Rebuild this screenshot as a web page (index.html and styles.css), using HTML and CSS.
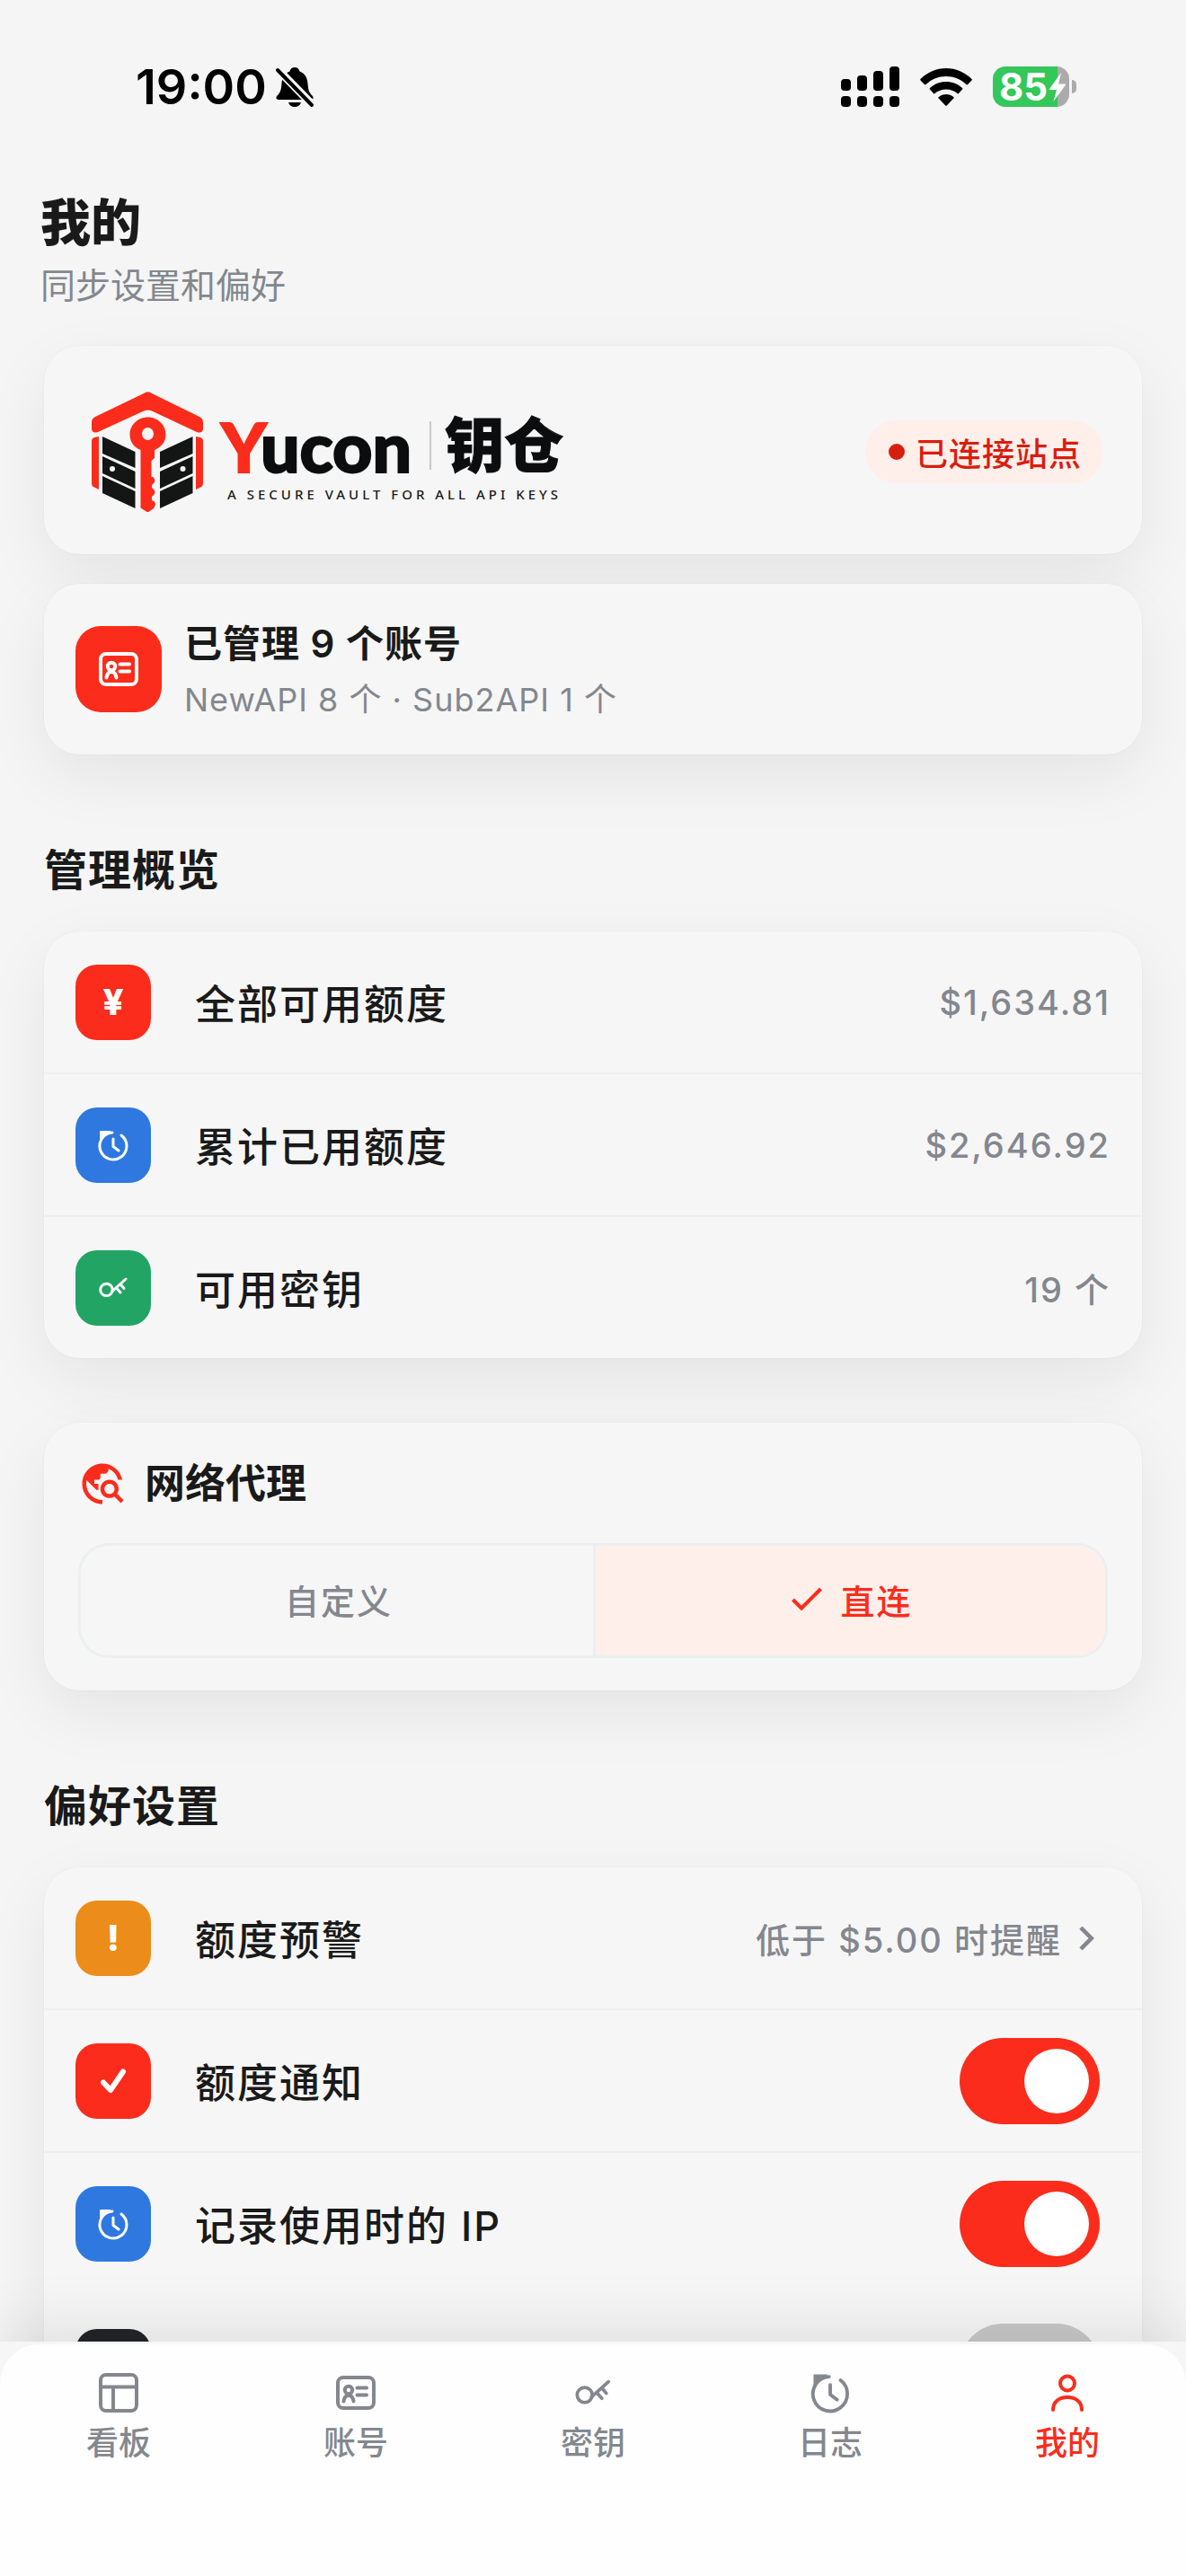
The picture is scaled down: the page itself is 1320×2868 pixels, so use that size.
FILE: index.html
```html
<!DOCTYPE html>
<html lang="zh-CN">
<head>
<meta charset="utf-8">
<meta name="viewport" content="width=device-width, initial-scale=1">
<title>我的 - Yucon 钥仓</title>
<link rel="stylesheet" href="styles.css">
</head>
<body>
<svg class="sprite" aria-hidden="true">
  <symbol id="i-card" viewBox="0 0 46 40">
    <rect x="3" y="3" width="40" height="34" rx="6"/>
    <circle cx="15" cy="17" r="4.2"/>
    <path d="M9.500 29.500c.6-4 2.600-6.500 5.500-6.500s4.900 2.500 5.500 6.500M24.500 14.500h10.500M24.500 22.500h10.500"/>
  </symbol>
  <symbol id="i-clock" viewBox="0 0 36 36">
    <path d="M27 7A15 15 0 1 1 17 4M18 11v8.500l6 4.500"/>
    <path d="M4 2.500H15L4 12z" fill="currentColor" stroke-width="1"/>
  </symbol>
  <symbol id="i-key" viewBox="0 0 34 26">
    <circle cx="9.500" cy="15" r="6.800"/>
    <path d="M15.500 17 31 3M20.500 13l4.500 5M25 8.800l4 4.700"/>
  </symbol>
  <symbol id="i-check" viewBox="0 0 28 28"><path d="M3 15.500 11 24 25 3.500"/></symbol>
</svg>
<div class="app">
  <div class="status">
    <div class="status-side">
      <time class="clock">19:00</time>
      <svg class="bell" viewBox="0 0 42 44">
        <path d="M21 0c3 0 5 2 5.500 4.500C33 7 35 12 35.500 18c.5 8 2 10.500 5 13.500 2 2 1 4.500-1.500 4.500H3c-2.500 0-3.500-2.500-1.500-4.500 3-3 4.500-5.500 5-13.500C7 12 9 7 15.500 4.500 16 2 18 0 21 0zM14 39h14c-1 3.500-3.500 5-7 5s-6-1.500-7-5z"/>
        <path class="bell-gap" d="M0 0 42 43"/>
        <path class="bell-slash" d="M2 3 40 42"/>
      </svg>
    </div>
    <div class="status-side status-right">
      <svg class="signal" viewBox="0 0 65 45">
        <rect y="14" width="11" height="13" rx="4"/><rect x="18" y="10" width="11" height="17" rx="4"/><rect x="36" y="5" width="11" height="22" rx="4"/><rect x="54" width="11" height="27" rx="4"/>
        <rect y="33" width="11" height="12" rx="4"/><rect x="18" y="33" width="11" height="12" rx="4"/><rect x="36" y="33" width="11" height="12" rx="4"/><rect x="54" y="33" width="11" height="12" rx="4"/>
      </svg>
      <svg class="wifi" viewBox="0 0 58 42">
        <path d="M29 0C40 0 50 4.500 57.500 12 58 12.500 58 13 57.500 13.500L53 18c-.5.500-1 .5-1.500 0C45 12 37.500 9 29 9S13 12 6.500 18c-.5.500-1 .5-1.500 0L.5 13.500C0 13 0 12.500.5 12 8 4.500 18 0 29 0z"/>
        <path d="M29 15c7 0 13 2.500 18 7 .6.500.6 1 0 1.500L43 28c-.5.500-1 .5-1.500 0C38 25 34 23.500 29 23.500S20 25 16.500 28c-.5.500-1 .5-1.500 0l-4-4.500c-.6-.5-.6-1 0-1.500 5-4.500 11-7 18-7z"/>
        <path d="M29 29c3.200 0 6 1.200 8.300 3 .6.500.6 1 0 1.600L30 41.300c-.7.700-1.300.7-2 0l-7.300-7.700c-.6-.6-.6-1.100 0-1.600C23 30.200 25.800 29 29 29z"/>
      </svg>
      <div class="battery-wrap">
        <div class="battery"><span>85</span><svg viewBox="0 0 20 32"><path d="M14 0 1 18c-.5.700-.2 1 .5 1H9L5.500 32 19 13.500c.5-.7.200-1-.5-1H11z"/></svg></div>
        <i class="battery-nub"></i>
      </div>
    </div>
  </div>

  <main class="screen">
    <header class="head">
      <h1>我的</h1>
      <p>同步设置和偏好</p>
    </header>

    <section class="card brand">
      <div class="logo">
        <svg class="logo-mark" viewBox="0 0 124 134">
          <path class="red" d="M58 2Q62.500-1.500 67 2L120 28Q124 30 124 34V42Q123 47 117 45L68 22Q62.500 19 57 22L7 45Q1 47 0 42V34Q0 30 4 28Z"/>
          <path class="red" d="M8 50v59l-6-3q-2-1-2-4V55q0-3 3-4zM116 50v59l6-3q2-1 2-4V55q0-3-3-4z"/>
          <path class="black" d="M12 50l36.500 17v18L12 69zM12 72l36.500 17v19L12 91zM12 94l36.500 17v19L12 113zM112.500 50 76 67v18l36.500-16zM112.500 72 76 89v19l36.500-17zM112.500 94 76 111v19l36.500-17z"/>
          <circle class="hole" cx="23" cy="86" r="3"/><circle class="hole" cx="101.500" cy="86" r="3"/>
          <path class="red" fill-rule="evenodd" d="M62.500 28.500c11 0 20 8.500 20 19.500 0 7-4 13-12.500 17v9l-3.500 3v18h2q2.500 3 1.500 6l-3 3v3l3 3q1 3-1 5l-2 2v4q4 1 4 5l-2 4-6.500 4.500-8-5V65c-8-3-12-10-12-17 0-11 9-19.500 20-19.500zm0 11.500a6.500 7 0 1 0 0 14 6.500 7 0 1 0 0-14z"/>
        </svg>
        <div class="logo-text">
          <div class="logo-name"><span class="logo-en"><b>Y</b>ucon</span><i></i><span class="logo-cn">钥仓</span></div>
          <div class="logo-tag">A SECURE VAULT FOR ALL API KEYS</div>
        </div>
      </div>
      <div class="badge"><i></i>已连接站点</div>
    </section>

    <section class="card account">
      <span class="tile tile-lg red-bg"><svg class="ico w46"><use href="#i-card"/></svg></span>
      <div class="account-text">
        <h2 class="account-title">已管理 9 个账号</h2>
        <p class="account-sub">NewAPI 8 个 · Sub2API 1 个</p>
      </div>
    </section>

    <h2 class="section-title">管理概览</h2>
    <ul class="card list">
      <li><span class="tile red-bg">¥</span><span class="label">全部可用额度</span><span class="value">$1,634.81</span></li>
      <li><span class="tile blue-bg"><svg class="ico w36"><use href="#i-clock"/></svg></span><span class="label">累计已用额度</span><span class="value">$2,646.92</span></li>
      <li><span class="tile green-bg"><svg class="ico w34"><use href="#i-key"/></svg></span><span class="label">可用密钥</span><span class="value">19 个</span></li>
    </ul>

    <section class="card proxy">
      <h2 class="proxy-title">
        <svg viewBox="0 0 24 24"><path d="M19.300 16.900c.4-.7.7-1.500.7-2.400 0-2.500-2-4.500-4.500-4.500S11 12 11 14.500s2 4.500 4.500 4.500c.9 0 1.700-.3 2.400-.7l3.200 3.200 1.400-1.400-3.200-3.200zm-3.800.1c-1.400 0-2.500-1.100-2.500-2.500s1.100-2.500 2.500-2.500 2.500 1.100 2.500 2.500-1.100 2.500-2.500 2.500zM12 20v2C6.480 22 2 17.520 2 12S6.480 2 12 2c4.840 0 8.870 3.440 9.800 8h-2.070c-.64-2.460-2.400-4.470-4.730-5.410V5c0 1.100-.9 2-2 2h-2v2c0 .55-.45 1-1 1H8v2h2v3H9l-4.790-4.790C4.080 10.790 4 11.380 4 12c0 4.410 3.590 8 8 8z"/></svg>
        网络代理
      </h2>
      <div class="segment">
        <label><input type="radio" name="proxy"><span>自定义</span></label>
        <label><input type="radio" name="proxy" checked><svg viewBox="0 0 34 26"><path d="M1.500 14 11 23.500 32.500 2"/></svg><span>直连</span></label>
      </div>
    </section>

    <h2 class="section-title">偏好设置</h2>
    <ul class="card list">
      <li><span class="tile orange-bg">!</span><span class="label">额度预警</span>
        <button class="value link" type="button">低于 $5.00 时提醒<svg viewBox="0 0 24 24"><path d="M10 6 8.590 7.410 13.170 12l-4.580 4.590L10 18l6-6z"/></svg></button></li>
      <li><span class="tile red-bg"><svg class="ico w28 thick"><use href="#i-check"/></svg></span><label class="label" for="s1">额度通知</label><input class="switch" id="s1" type="checkbox" checked></li>
      <li><span class="tile blue-bg"><svg class="ico w36"><use href="#i-clock"/></svg></span><label class="label" for="s2">记录使用时的 IP</label><input class="switch" id="s2" type="checkbox" checked></li>
      <li class="plain"><span class="tile dark-bg"></span><span class="label"></span><input class="switch" type="checkbox" aria-label="开关"></li>
    </ul>
  </main>

  <div class="dock">
    <nav class="tabs">
      <a href="#"><span><svg class="ico w46" viewBox="0 0 46 46"><rect x="3" y="3" width="40" height="40" rx="6"/><path d="M3 16.500h40M17 16.500V43"/></svg></span>看板</a>
      <a href="#"><span><svg class="ico w46"><use href="#i-card"/></svg></span>账号</a>
      <a href="#"><span><svg class="ico w42 fine"><use href="#i-key"/></svg></span>密钥</a>
      <a href="#"><span><svg class="ico w46 fine"><use href="#i-clock"/></svg></span>日志</a>
      <a href="#" class="active" aria-current="page"><span><svg class="ico w46" viewBox="0 0 46 46"><circle cx="23" cy="12.500" r="8"/><path d="M7 42c0-8.500 6.500-14 16-14s16 5.500 16 14"/></svg></span>我的</a>
    </nav>
  </div>
</div>
</body>
</html>
```

FILE: styles.css
```css
* { box-sizing: border-box; margin: 0; padding: 0; }

body {
  background: #f5f5f5;
  color: #1a1a1a;
  font-family: Inter, "Noto Sans CJK SC", sans-serif;
}

.sprite { position: absolute; width: 0; height: 0; }
.app { display: flex; flex-direction: column; height: 100vh; }

/* status bar */
.status {
  flex: none;
  display: flex;
  align-items: center;
  justify-content: space-between;
  height: 196px;
  padding: 0 122px 3px 151px;
  color: #000;
}
.status-side { display: flex; align-items: center; gap: 10px; }
.status-right { gap: 23px; }
.clock { font-size: 54px; font-weight: 600; }
.bell { width: 42px; height: 44px; }
.bell-gap { stroke: #f5f5f5; stroke-width: 9; }
.bell-slash { stroke: #000; stroke-width: 4; stroke-linecap: round; }
.signal { width: 65px; height: 45px; }
.wifi { width: 58px; height: 42px; }
.battery-wrap { display: flex; align-items: center; gap: 3px; }
.battery {
  display: flex;
  align-items: center;
  gap: 1px;
  width: 85px;
  height: 45px;
  padding-left: 7px;
  border-radius: 14px;
  background: linear-gradient(90deg, #34c759 72px, #ababab 72px);
  color: #fff;
  font-size: 42px;
  font-weight: 700;
}
.battery svg { width: 20px; height: 32px; fill: #fff; flex: none; }
.battery-nub { width: 5px; height: 15px; border-radius: 0 5px 5px 0; background: #ababab; }

/* page */
.screen {
  flex: 1;
  min-height: 0;
  overflow: hidden auto;
  scrollbar-width: none;
  padding: 16px 49px 64px;
}
.head { margin: 0 -4px 39px; }
.head h1 { font-size: 56px; line-height: 72px; font-weight: 800; }
.head p { margin-top: 6px; font-size: 39px; line-height: 56px; color: #84878e; }

.card {
  border-radius: 40px;
  background: #f6f6f6;
  box-shadow: 0 0 0 1px rgba(0, 0, 0, .015), 0 24px 72px rgba(0, 0, 0, .07);
}

.brand {
  display: flex;
  align-items: center;
  justify-content: space-between;
  height: 232px;
  padding: 4px 43px 0 53px;
}
.logo { display: flex; align-items: center; gap: 20px; }
.logo-mark { width: 124px; height: 134px; }
.red { fill: #fb2c1b; }
.black { fill: #141616; }
.hole { fill: #f6f6f6; }
.logo-text { display: flex; flex-direction: column; gap: 6px; padding-top: 12px; }
.logo-name { display: flex; align-items: center; line-height: 76px; color: #0c0d0e; }
.logo-en { font-family: Lato, sans-serif; font-size: 77px; font-weight: 900; -webkit-text-stroke: 2px currentColor; }
.logo-en b { color: #fb2c1b; }
.logo-name i { width: 2px; height: 54px; margin: 0 15px 0 20px; background: #c8c8c8; }
.logo-cn { font-size: 66px; font-weight: 900; -webkit-text-stroke: 1px currentColor; }
.logo-tag {
  padding-left: 7px;
  font-family: "Noto Sans", sans-serif;
  font-size: 15px;
  line-height: 20px;
  letter-spacing: 4px;
  font-weight: 500;
}
.badge {
  display: flex;
  align-items: center;
  gap: 12px;
  height: 70px;
  padding: 0 24px 0 26px;
  border-radius: 35px;
  background: #ffefeb;
  color: #d81e0e;
  font-size: 36px;
  font-weight: 500;
  letter-spacing: 1px;
}
.badge i { width: 18px; height: 18px; border-radius: 50%; background: #d81e0e; }

.account { display: flex; align-items: center; gap: 25px; height: 190px; margin-top: 33px; padding: 0 35px; }
.account-text { padding-top: 6px; line-height: 62px; }
.account-title { font-size: 42px; font-weight: 600; letter-spacing: 1px; }
.account-sub { font-size: 36px; letter-spacing: 1px; color: #84878e; }

.section-title { margin: 97px 0 36px; font-size: 48px; line-height: 64px; font-weight: 600; letter-spacing: 1px; }

.tile {
  flex: none;
  display: grid;
  place-items: center;
  width: 84px;
  height: 84px;
  border-radius: 24px;
  color: #fff;
  font-size: 40px;
  font-weight: 800;
}
.tile-lg { width: 96px; height: 96px; border-radius: 28px; }
.red-bg { background: #fb2c1b; }
.blue-bg { background: #2f78e0; }
.green-bg { background: #22a464; }
.orange-bg { background: #ec8c1a; }
.dark-bg { background: #222528; }

.ico {
  fill: none;
  stroke: currentColor;
  stroke-width: 4;
  stroke-linecap: round;
  stroke-linejoin: round;
}
.w46 { width: 46px; height: 46px; }
.w42 { width: 42px; height: 42px; }
.w36 { width: 36px; height: 36px; stroke-width: 3; }
.w34 { width: 34px; height: 34px; stroke-width: 3; }
.w28 { width: 28px; height: 28px; }
.thick { stroke-width: 6; }
.fine { stroke-width: 3; }

.list { list-style: none; }
.list li { display: flex; align-items: center; height: 157px; padding: 0 35px; }
.list li + li { height: 159px; border-top: 2px solid #efefef; }
.list .plain { border-color: transparent; }
.label { flex: 1; margin-left: 49px; font-size: 45px; font-weight: 500; letter-spacing: 2px; }
.value { font-family: inherit; font-size: 38px; font-weight: 500; letter-spacing: 2px; color: #84878e; }
.link { display: flex; align-items: center; border: 0; background: none; }
.link svg { width: 54px; height: 54px; fill: currentColor; }

.switch {
  appearance: none;
  display: flex;
  align-items: center;
  width: 156px;
  height: 96px;
  margin-right: 12px;
  padding: 12px;
  border-radius: 48px;
  background: #c8c8c8;
}
.switch::before { content: ""; width: 48px; height: 48px; border-radius: 50%; background: #fff; }
.switch:checked { justify-content: flex-end; background: #fb2c1b; }
.switch:checked::before { width: 72px; height: 72px; }

.proxy { margin-top: 72px; padding: 38px 38px 36px; }
.proxy-title { display: flex; align-items: center; gap: 20px; font-size: 45px; line-height: 60px; font-weight: 700; }
.proxy-title svg { width: 54px; height: 54px; fill: #fb2c1b; }
.segment {
  display: grid;
  grid-template-columns: 1fr 1fr;
  height: 128px;
  margin-top: 36px;
  overflow: hidden;
  border: 3px solid #eceff0;
  border-radius: 34px;
}
.segment label {
  display: flex;
  align-items: center;
  justify-content: center;
  gap: 20px;
  padding: 0 0 4px 4px;
  color: #84878e;
  font-size: 38px;
  font-weight: 500;
  letter-spacing: 2px;
}
.segment label + label { border-left: 3px solid #eceff0; }
.segment input { appearance: none; position: absolute; }
.segment label:has(:checked) { background: #ffefeb; color: #fb2c1b; }
.segment svg { width: 34px; height: 26px; fill: none; stroke: currentColor; stroke-width: 4; }

/* bottom tabs */
.dock {
  flex: none;
  position: relative;
  padding-top: 3px;
  background: #f6f6f6;
  box-shadow: 0 -8px 72px rgba(0, 0, 0, .11);
}
.tabs {
  display: grid;
  grid-template-columns: repeat(5, 1fr);
  height: 258px;
  padding-top: 31px;
  border-radius: 44px 44px 0 0;
  background: #fefefe;
}
.tabs a {
  display: flex;
  flex-direction: column;
  align-items: center;
  gap: 9px;
  color: #84878e;
  font-size: 36px;
  line-height: 48px;
  font-weight: 500;
  text-decoration: none;
}
.tabs span { display: grid; place-items: center; height: 46px; }
.tabs .active { color: #fb2c1b; }
```
